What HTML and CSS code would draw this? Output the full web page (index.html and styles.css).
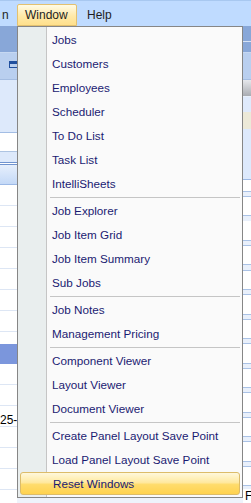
FILE: index.html
```html
<!DOCTYPE html>
<html lang="en">
<head>
  <meta charset="UTF-8">
  <title>Window Menu</title>
  <link rel="stylesheet" href="styles.css">
</head>
<body>
  <div class="app">
    <!-- Menu bar -->
    <div class="menubar">
      <span class="mb-item mb-cut">n</span>
      <span class="mb-item mb-open">Window</span>
      <span class="mb-item">Help</span>
    </div>

    <!-- Workspace behind the open menu -->
    <div class="workspace">
      <div class="pane pane-left">
        <div class="band-dark"></div>
        <div class="band-tool"><span class="win-icon"></span></div>
        <div class="band-pale"></div>
        <div class="band-white"></div>
        <div class="band-pale short"></div>
        <div class="grid-head"></div>
        <div class="grid-row"></div>
        <div class="grid-row"></div>
        <div class="grid-row"></div>
        <div class="grid-row"></div>
        <div class="grid-row"></div>
        <div class="grid-row"></div>
        <div class="grid-row"></div>
        <div class="grid-gap"></div>
        <div class="grid-row selected"></div>
        <div class="grid-row"></div>
        <div class="grid-row"></div>
        <div class="grid-row text">25-1</div>
        <div class="grid-row"></div>
        <div class="grid-row"></div>
        <div class="grid-row"></div>
      </div>
      <div class="pane pane-mid">
        <div class="band-dark"></div>
        <div class="band-tool"></div>
      </div>
      <div class="pane pane-right">
        <div class="band-dark"></div>
        <div class="band-tool"></div>
        <div class="r-button"></div>
        <div class="r-light"></div>
        <div class="r-beige"></div>
        <div class="r-pale"></div>
        <div class="r-lines"></div>
        <div class="r-letter">F</div>
      </div>
    </div>

    <!-- Open dropdown -->
    <div class="dropdown">
      <div class="dd-item">Jobs</div>
      <div class="dd-item">Customers</div>
      <div class="dd-item">Employees</div>
      <div class="dd-item">Scheduler</div>
      <div class="dd-item">To Do List</div>
      <div class="dd-item">Task List</div>
      <div class="dd-item">IntelliSheets</div>
      <div class="dd-sep"></div>
      <div class="dd-item">Job Explorer</div>
      <div class="dd-item">Job Item Grid</div>
      <div class="dd-item">Job Item Summary</div>
      <div class="dd-item">Sub Jobs</div>
      <div class="dd-sep"></div>
      <div class="dd-item">Job Notes</div>
      <div class="dd-item">Management Pricing</div>
      <div class="dd-sep"></div>
      <div class="dd-item">Component Viewer</div>
      <div class="dd-item">Layout Viewer</div>
      <div class="dd-item">Document Viewer</div>
      <div class="dd-sep"></div>
      <div class="dd-item">Create Panel Layout Save Point</div>
      <div class="dd-item">Load Panel Layout Save Point</div>
      <div class="dd-item hot">Reset Windows</div>
    </div>
  </div>
</body>
</html>
```

FILE: styles.css
```css
/* General */
* {
  box-sizing: border-box;
}

body {
  margin: 0;
  font-family: 'Liberation Sans', Arial, sans-serif;
  font-size: 12px;
  background: #eef3fb;
  overflow: hidden;
}

.app {
  position: relative;
  width: 251px;
  height: 503px;
}

/* Menu bar */
.menubar {
  height: 26px;
  display: flex;
  align-items: flex-end;
  background: #bfdbff;
  border-top: 1px solid #a8c8f0;
  color: #1e1e1e;
}

.mb-item {
  height: 22px;
  line-height: 20px;
  padding: 0 7px;
  border: 1px solid transparent;
}

.mb-cut {
  width: 17px;
  padding: 0 0 0 1px;
}

.mb-open {
  width: 60px;
  margin-right: 2px;
  border-color: #e3c170;
  border-radius: 2px 2px 0 0;
  background: linear-gradient(to bottom, #fffbe6, #ffe9a8 55%, #ffe08c);
}

/* Workspace */
.workspace {
  display: flex;
  height: 477px;
}

.pane {
  display: flex;
  flex-direction: column;
}

.pane-left {
  width: 17px;
  background: #fff;
}

.pane-mid {
  flex: 1;
}

.pane-right {
  width: 8px;
  background: #fff;
}

.band-dark {
  height: 27px;
  background: #88a7d8;
  border-bottom: 1px solid #c6d8f2;
}

.pane-right .band-dark {
  background: linear-gradient(to bottom, #88a7d8 0, #88a7d8 15px, #d6e3f6 15px, #d6e3f6 16px, #88a7d8 16px);
}

.band-tool {
  height: 27px;
  background: #b9cfef;
  border-bottom: 1px solid #a4bde2;
  position: relative;
}

.win-icon {
  position: absolute;
  left: 9px;
  top: 8px;
  width: 10px;
  height: 7px;
  border: 1px solid #1f4f9e;
  border-top-width: 3px;
}

.band-pale {
  height: 53px;
  background: #dde9fb;
  border-bottom: 1px solid #a3bde4;
}

.band-pale.short {
  height: 10px;
  border-bottom: none;
}

.band-white {
  height: 19px;
  background: #fff;
  border-bottom: 1px solid #aec4e2;
}

.grid-head {
  height: 23px;
  border-top: 1px solid #6f93cf;
  border-bottom: 1px solid #9cb9e6;
  background: linear-gradient(to bottom, #ffffff 0, #ffffff 1px, #6f93cf 1px, #6f93cf 2px, #e6effc 2px, #c4d9f7);
}

.grid-row {
  height: 21px;
  border-bottom: 1px solid #dde6f4;
  background: #fff;
}

.grid-gap {
  height: 12px;
}

.grid-row.selected {
  height: 20px;
  background: #7b96dc;
  border-bottom: none;
}

.grid-row.text {
  padding-top: 8px;
  line-height: 12px;
  color: #000;
  white-space: nowrap;
}

.r-button {
  height: 17px;
  background: linear-gradient(to bottom, #e6e8ec, #a9acb2);
  border-bottom: 1px solid #e8f0fb;
}

.r-light {
  height: 15px;
  background: #dfeafc;
}

.r-beige {
  height: 17px;
  background: #ece9d8;
}

.r-pale {
  height: 51px;
  background: #dde9fc;
  border-bottom: 1px solid #9cb8e4;
}

.r-lines {
  flex: 1;
  background: repeating-linear-gradient(to bottom, #fff 0, #fff 11px, #aac2e6 11px, #aac2e6 12px, #e9f0fb 12px, #e9f0fb 16px, #aac2e6 16px, #aac2e6 17px, #fff 17px, #fff 24.5px);
}

.r-letter {
  height: 14px;
  line-height: 14px;
  background: #fff;
  color: #000;
  padding-left: 2px;
}

/* Dropdown */
.dropdown {
  position: absolute;
  left: 17px;
  top: 26px;
  width: 226px;
  height: 472px;
  padding: 1px 2px 1px 1px;
  border: 1px solid #868686;
  background: linear-gradient(to right, #e9eeee 0, #e9eeee 28px, #c5c5c5 28px, #c5c5c5 29px, #fafafa 29px);
}

.dd-item {
  height: 24px;
  line-height: 24px;
  padding-left: 33px;
  color: #1a1a72;
  font-size: 11.7px;
  white-space: nowrap;
}

.dd-item.hot {
  height: 23px;
  line-height: 21px;
  margin-left: 1px;
  padding-left: 32px;
  border: 1px solid #dcbc6a;
  border-radius: 3px;
  background: linear-gradient(to bottom, #fff8dc, #ffe9a0 45%, #ffdc6c 55%, #ffd24f);
}

.dd-sep {
  height: 3px;
  margin-left: 31px;
  background: linear-gradient(to bottom, transparent 0, transparent 1px, #c5c5c5 1px, #c5c5c5 2px, transparent 2px);
}
```
